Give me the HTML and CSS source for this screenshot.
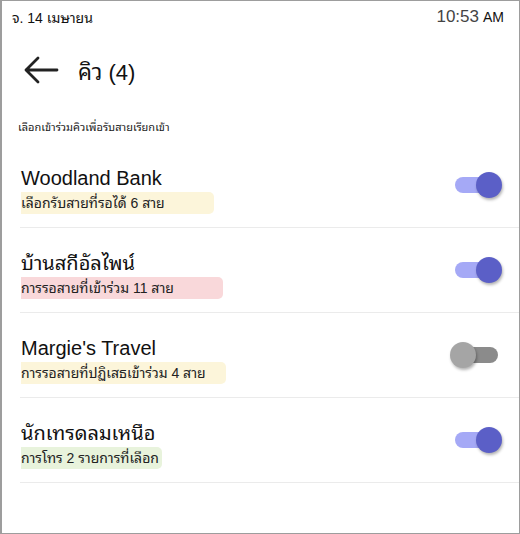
FILE: index.html
```html
<!DOCTYPE html>
<html lang="th">
<head>
<meta charset="utf-8">
<title>คิว</title>
<link rel="stylesheet" href="styles.css">
</head>
<body>
<div class="screen">
  <div class="status">
    <span class="date">จ. 14 เมษายน</span>
    <span class="clock"><span class="time">10:53</span><span class="ampm">AM</span></span>
  </div>
  <div class="header">
    <svg class="back" width="36" height="30" viewBox="0 0 36 30" aria-hidden="true">
      <path d="M34 15 H3 M15 3 L3 15 L15 27" fill="none" stroke="#222" stroke-width="2.8" stroke-linecap="round" stroke-linejoin="round"/>
    </svg>
    <span class="title">คิว (4)</span>
  </div>
  <div class="hint">เลือกเข้าร่วมคิวเพื่อรับสายเรียกเข้า</div>
  <div class="list">
    <div class="row">
      <div class="text">
        <div class="name">Woodland Bank</div>
        <div class="sub"><span class="mark yellow pad-l">เลือกรับสายที่รอได้ 6 สาย</span></div>
      </div>
      <div class="toggle on"><span class="track"></span><span class="knob"></span></div>
    </div>
    <div class="row">
      <div class="text">
        <div class="name">บ้านสกีอัลไพน์</div>
        <div class="sub"><span class="mark pink pad-l">การรอสายที่เข้าร่วม 11 สาย</span></div>
      </div>
      <div class="toggle on"><span class="track"></span><span class="knob"></span></div>
    </div>
    <div class="row">
      <div class="text">
        <div class="name">Margie's Travel</div>
        <div class="sub"><span class="mark yellow pad-s">การรอสายที่ปฏิเสธเข้าร่วม 4 สาย</span></div>
      </div>
      <div class="toggle off"><span class="track"></span><span class="knob"></span></div>
    </div>
    <div class="row">
      <div class="text">
        <div class="name">นักเทรดลมเหนือ</div>
        <div class="sub"><span class="mark green pad-n">การโทร 2 รายการที่เลือก</span></div>
      </div>
      <div class="toggle on"><span class="track"></span><span class="knob"></span></div>
    </div>
  </div>
</div>
</body>
</html>
```
FILE: styles.css
```css
html, body {
  margin: 0;
  padding: 0;
  background: #fff;
}
body {
  font-family: "Liberation Sans", "Noto Sans Thai Looped", "Loma", "Garuda", "Noto Serif Thai", "Norasi", "Noto Sans Thai", sans-serif;
  color: #111;
}
.screen {
  width: 520px;
  height: 534px;
  box-sizing: border-box;
  border: 1px solid #9d9d9d;
  border-left-width: 2px;
  overflow: hidden;
  background: #fff;
}
.status {
  height: 31px;
  display: flex;
  align-items: center;
  justify-content: space-between;
  padding: 0 15px 0 10px;
}
.date {
  font-size: 14px;
  color: #111;
}
.clock {
  display: flex;
  align-items: baseline;
  gap: 4px;
}
.time {
  font-size: 17px;
  color: #444;
}
.ampm {
  font-size: 14px;
  color: #111;
}
.header {
  height: 76px;
  display: flex;
  align-items: center;
  padding-left: 21px;
}
.back {
  display: block;
  margin-right: 19px;
}
.title {
  font-size: 22px;
  color: #111;
}
.hint {
  font-size: 11px;
  line-height: 16px;
  padding: 11px 0 8px 16px;
  color: #222;
}
.list {
  margin-left: 18px;
}
.row {
  display: flex;
  justify-content: space-between;
  padding: 21px 0 13px 1px;
  border-bottom: 1px solid #ebebeb;
}
.name {
  font-size: 20px;
  line-height: 28px;
  color: #111;
}
.sub {
  font-size: 14px;
  line-height: 22px;
  color: #222;
}
.mark {
  display: inline-block;
  border-radius: 0 5px 5px 0;
}
.yellow { background: #fcf5da; }
.pink { background: #f9d8da; }
.green { background: #e8f3dc; }
.pad-l { padding-right: 49px; }
.pad-s { padding-right: 20px; }
.pad-n { padding-right: 3px; }
.toggle {
  position: relative;
  width: 52px;
  height: 26px;
  margin-top: 8px;
  margin-right: 17px;
  flex: none;
}
.track {
  position: absolute;
  left: 5px;
  right: 4px;
  top: 5px;
  height: 16px;
  border-radius: 8px;
}
.knob {
  position: absolute;
  top: 0;
  width: 26px;
  height: 26px;
  border-radius: 50%;
  box-shadow: 1px 2px 3px rgba(0, 0, 0, 0.3);
}
.on .track { background: #a5a9f6; }
.on .knob { right: 0; background: #5b5fc7; }
.off .track { background: #8b8b8b; }
.off .knob { left: 0; background: #a5a5a5; }
```
